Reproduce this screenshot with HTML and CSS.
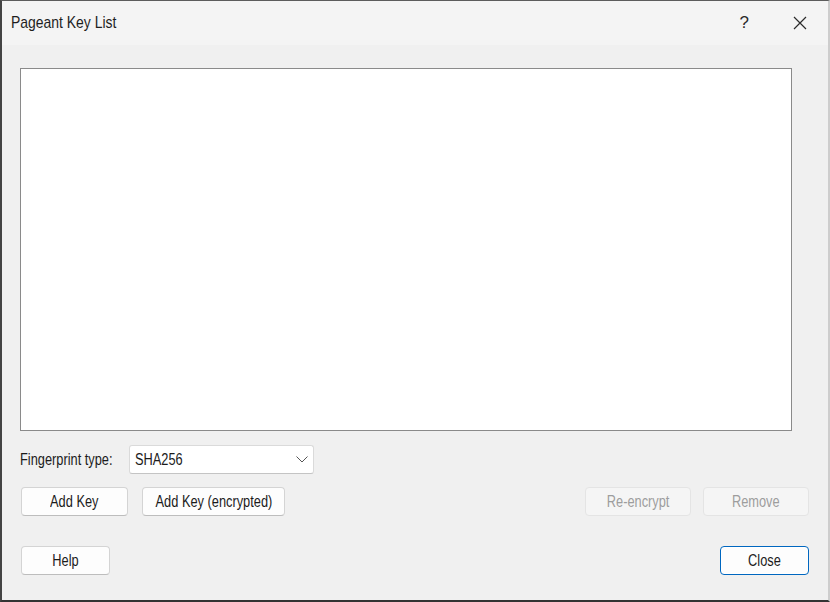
FILE: index.html
```html
<!DOCTYPE html>
<html>
<head>
<meta charset="utf-8">
<title>Pageant Key List</title>
<link rel="stylesheet" href="styles.css">
</head>
<body>
<div class="window">
  <div class="titlebar">
    <span class="title t">Pageant Key List</span>
    <div class="caption-btns">
      <span class="help-glyph">?</span>
      <svg class="close-glyph" width="14" height="14" viewBox="0 0 14 14"><path d="M1 1 L13 13 M13 1 L1 13" stroke="#2b2b2b" stroke-width="1.2" fill="none"/></svg>
    </div>
  </div>
  <div class="content">
    <div class="listbox"></div>
    <div class="row fp-row">
      <span class="label"><span class="t">Fingerprint type:</span></span>
      <div class="combo">
        <span class="t">SHA256</span>
        <svg class="chev" width="12" height="7" viewBox="0 0 12 7"><path d="M0.5 0.5 L6 6 L11.5 0.5" stroke="#555" stroke-width="1" fill="none"/></svg>
      </div>
    </div>
    <div class="row btn-row">
      <button class="btn w107"><span class="t c">Add Key</span></button>
      <button class="btn w143"><span class="t c">Add Key (encrypted)</span></button>
      <span class="spacer"></span>
      <button class="btn w106 disabled"><span class="t c">Re-encrypt</span></button>
      <button class="btn w106 disabled"><span class="t c">Remove</span></button>
    </div>
    <div class="row bottom-row">
      <button class="btn w89"><span class="t c">Help</span></button>
      <span class="spacer"></span>
      <button class="btn w89 default"><span class="t c">Close</span></button>
    </div>
  </div>
</div>
</body>
</html>
```

FILE: styles.css
```css
html, body {
  margin: 0;
  padding: 0;
  background: #f0f0f0;
}
.window {
  width: 830px;
  height: 602px;
  box-sizing: border-box;
  border-top: 1px solid #5c5c5c;
  border-left: 2px solid #444444;
  border-right: 2px solid #cdcdcd;
  border-bottom: 2px solid #333333;
  background: #f0f0f0;
  display: flex;
  flex-direction: column;
  font-family: "Liberation Sans", Arial, sans-serif;
  color: #1b1b1b;
}
/* narrow rendering of the dialog font */
.t {
  display: inline-block;
  white-space: nowrap;
  transform: scaleX(0.8);
  transform-origin: left center;
}
.t.c {
  transform-origin: center center;
}
.titlebar {
  height: 44px;
  background: #f4f4f4;
  display: flex;
  align-items: center;
  padding-left: 9px;
  padding-right: 21px;
}
.title {
  font-size: 17px;
  color: #1e1e1e;
  transform: scaleX(0.82);
}
.caption-btns {
  margin-left: auto;
  display: flex;
  align-items: center;
  gap: 44px;
}
.help-glyph {
  font-size: 17px;
  color: #2b2b2b;
}
.content {
  padding: 23px 19px 0 18px;
  display: flex;
  flex-direction: column;
}
.listbox {
  width: 772px;
  height: 363px;
  box-sizing: border-box;
  background: #ffffff;
  border: 1px solid #8a8a8a;
}
.row {
  display: flex;
  align-items: center;
}
.fp-row {
  margin-top: 14px;
  height: 29px;
}
.label {
  font-size: 16px;
  width: 109px;
  flex: none;
  white-space: nowrap;
  color: #1b1b1b;
}
.combo {
  width: 185px;
  height: 29px;
  box-sizing: border-box;
  background: #ffffff;
  border: 1px solid #dadada;
  border-bottom-color: #c4c4c4;
  border-radius: 3px;
  display: flex;
  align-items: center;
  padding-left: 5px;
  padding-right: 5px;
  font-size: 16px;
}
.chev {
  margin-left: auto;
}
.btn-row {
  margin-top: 13px;
  padding-left: 1px;
  gap: 14px;
}
.bottom-row {
  margin-top: 30px;
  padding-left: 1px;
}
.spacer {
  flex: 1;
}
.btn {
  height: 29px;
  box-sizing: border-box;
  font-family: inherit;
  font-size: 16px;
  color: #1b1b1b;
  background: #fdfdfd;
  border: 1px solid #d4d4d4;
  border-bottom-color: #bdbdbd;
  border-radius: 4px;
  padding: 0;
  display: flex;
  align-items: center;
  justify-content: center;
  white-space: nowrap;
  overflow: visible;
}
.btn.disabled {
  background: #f5f5f5;
  border-color: #e4e4e4;
  color: #9d9d9d;
}
.btn.default {
  border: 1px solid #0067c0;
  box-shadow: inset 0 0 0 1px #ffffff;
}
.w107 { width: 107px; }
.w143 { width: 143px; }
.w106 { width: 106px; }
.w89 { width: 89px; }
.btn-row .w106 + .w106 { margin-left: -2px; }
```
